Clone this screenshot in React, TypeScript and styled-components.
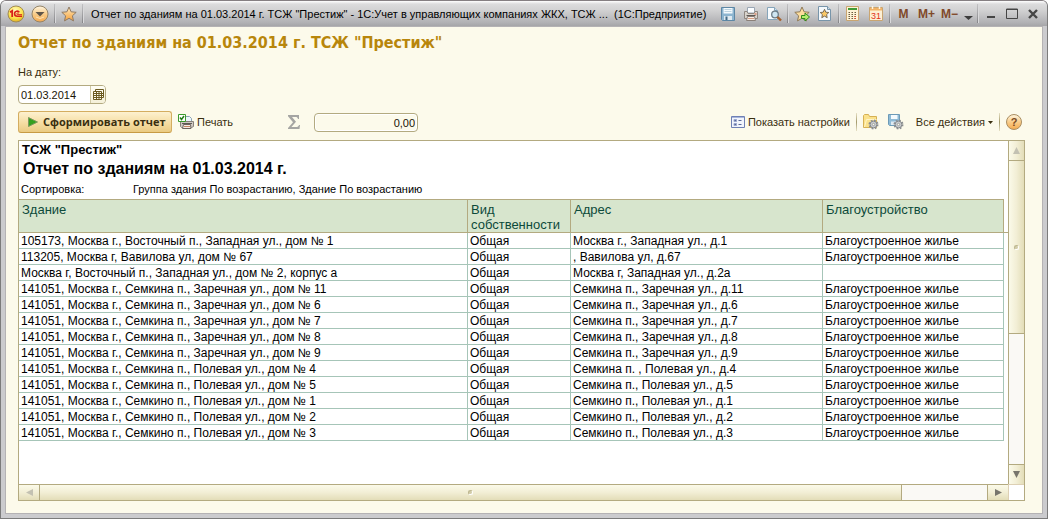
import React from "react";
import styled, { createGlobalStyle, css } from "styled-components";

const colors = {
  cream: "#fcfaeb",
  line: "#b3aa80",
  grid: "#a6c5b8",
  headBg: "#d7e5cd",
  headText: "#0d4a3a",
  text: "#3a2f10",
  accent: "#b8860b",
};

const GlobalStyle = createGlobalStyle`
  *, *::before, *::after { box-sizing: border-box; }
  body { margin: 0; background: #fff; font: 11px/14px "Liberation Sans", Arial, sans-serif; color: ${colors.text}; }
  button, input { font: inherit; color: inherit; margin: 0; }
  svg { display: block; flex: none; }
`;

const Window = styled.div`
  min-height: 100vh;
  display: flex;
  flex-direction: column;
  border: 1px solid #7b7b7b;
  border-top-color: #857f82;
  border-radius: 6px 6px 0 0;
  background: #cbcbce;
  overflow: hidden;
`;

const TitleBar = styled.header`
  display: flex;
  align-items: center;
  height: 25px;
  padding: 0 4px 0 3px;
  background: linear-gradient(#fff 0, #dcdcdd 3px, #d2d2d3 9px, #b0b0b3 22px, #a5a5a8 25px);
`;

const TitleText = styled.span`
  flex: 1;
  min-width: 0;
  padding-left: 6px;
  color: #000;
  white-space: pre;
  overflow: hidden;
  text-overflow: ellipsis;
`;

const Divider = styled.span`
  flex: none;
  width: 1px;
  height: 19px;
  margin: 0 2px;
  background: linear-gradient(#c2c2c4, #858588);
  box-shadow: 1px 0 0 #d9d9db;
`;

const BarButton = styled.button<{ $w?: number }>`
  flex: none;
  display: flex;
  align-items: center;
  justify-content: center;
  width: ${(p) => p.$w ?? 23}px;
  height: 22px;
  padding: 0;
  border: 0;
  background: none;
`;

const MemoryButton = styled(BarButton)`
  color: #80492a;
  font: bold 12px/14px "Liberation Sans", Arial, sans-serif;
`;

const Client = styled.main`
  flex: 1;
  display: flex;
  flex-direction: column;
  margin: 0 4px 4px;
  padding: 5px 17px 12px 12px;
  border: 1px solid #b4b2b4;
  background: ${colors.cream};
`;

const PageTitle = styled.h1`
  margin: 0 0 11px;
  font: bold 16px/22px "DejaVu Sans Condensed", Tahoma, sans-serif;
  color: ${colors.accent};
`;

const DateField = styled.div`
  display: flex;
  flex-direction: column;
  align-items: flex-start;
  gap: 6px;
`;

const fieldBox = css`
  height: 19px;
  border: 1px solid ${colors.line};
  border-radius: 4px;
  overflow: hidden;
`;

const DateBox = styled.div`
  ${fieldBox}
  display: flex;
  width: 88px;
  background: #fff;
`;

const DateInput = styled.input`
  flex: 1;
  min-width: 0;
  padding: 1px 2px 0;
  border: 0;
  outline: 0;
  background: none;
  color: #1a1508;
`;

const PickButton = styled.button`
  display: flex;
  align-items: center;
  justify-content: center;
  width: 15px;
  padding: 0;
  border: 0;
  border-left: 1px solid #d0c9a4;
  background: linear-gradient(#fffef5, #f4f0d8);
`;

const Toolbar = styled.div`
  display: flex;
  align-items: center;
  height: 22px;
  margin: 7px 0;
`;

const PrimaryButton = styled.button`
  display: flex;
  align-items: center;
  gap: 5px;
  width: 154px;
  height: 22px;
  padding: 0 4px 0 9px;
  border: 1px solid #d4ad60;
  border-bottom-color: #c79b45;
  border-radius: 3px;
  background: linear-gradient(#fdf1cf, #f5dda3 55%, #eacb83);
  font: bold 11px/14px "Open Sans", Tahoma, sans-serif;
  white-space: nowrap;
`;

const ToolButton = styled.button`
  display: flex;
  align-items: center;
  gap: 3px;
  height: 20px;
  padding: 0;
  border: 0;
  background: none;
  white-space: nowrap;
`;

const PrintButton = styled(ToolButton)`
  margin-left: 6px;
`;

const Sum = styled.label`
  display: flex;
  align-items: center;
  gap: 14px;
  margin-left: 55px;
`;

const SumInput = styled.input`
  ${fieldBox}
  width: 104px;
  padding: 1px 2px 0;
  background: ${colors.cream};
  box-shadow: inset 0 0 0 1px #fff;
  color: #1a1508;
  text-align: right;
`;

const ToolsRight = styled.div`
  display: flex;
  align-items: center;
  gap: 6px;
  margin-left: auto;
  padding-right: 3px;
`;

const ToolDivider = styled.span`
  width: 1px;
  height: 18px;
  background: linear-gradient(#e6e0c4, #a49a6c, #e6e0c4);
`;

const IconPair = styled.div`
  display: flex;
  gap: 9px;
  margin-right: 6px;
`;

const Sheet = styled.section`
  flex: 1;
  display: grid;
  grid-template: 1fr 16px / minmax(0, 1fr) 16px;
  border: 1px solid ${colors.line};
  background: #fff;
`;

const Report = styled.div`
  color: #000;
  overflow: hidden;
`;

const Organization = styled.div`
  padding-left: 3px;
  font: bold 13px/17px "Liberation Sans", Arial, sans-serif;
`;

const ReportTitle = styled.h2`
  margin: 0;
  padding-left: 4px;
  font: bold 16px/21px "Liberation Sans", Arial, sans-serif;
`;

const Sorting = styled.div`
  display: grid;
  grid-template-columns: 112px 1fr;
  padding-left: 2px;
  line-height: 20px;
`;

const Table = styled.table`
  width: calc(100% - 4px);
  table-layout: fixed;
  border-collapse: separate;
  border-spacing: 0;
`;

const Col = styled.col<{ $w?: number }>`
  width: ${(p) => (p.$w ? `${p.$w}px` : "auto")};
`;

const HeadCell = styled.th`
  height: 34px;
  padding: 2px 3px 0;
  border: solid ${colors.line};
  border-width: 1px 1px 1px 0;
  background: ${colors.headBg};
  color: ${colors.headText};
  font: 13px/15px "Liberation Sans", Arial, sans-serif;
  text-align: left;
  vertical-align: top;

  /* the rule under the header runs on to the edge of the sheet */
  &:last-child {
    position: relative;
  }
  &:last-child::after {
    content: "";
    position: absolute;
    left: 100%;
    bottom: -1px;
    width: 5px;
    height: 1px;
    background: ${colors.line};
  }
`;

const Cell = styled.td`
  height: 16px;
  padding: 1px 2px 0;
  border: solid ${colors.grid};
  border-width: 0 1px 1px 0;
  font: 12px/14px "Liberation Sans", Arial, sans-serif;
  white-space: nowrap;
  overflow: hidden;
`;

const ScrollBar = styled.div<{ $vertical?: boolean }>`
  display: flex;
  flex-direction: ${(p) => (p.$vertical ? "column" : "row")};
  border: 0 solid ${colors.line};
  border-width: ${(p) => (p.$vertical ? "0 0 0 1px" : "1px 0 0 0")};
  background: #faf9f5;
`;

const barFill = css<{ $vertical?: boolean }>`
  background: linear-gradient(${(p) => (p.$vertical ? "to right" : "to bottom")}, #fbfae9, #f2eed5 50%, #e3ddb8);
`;

const ScrollButton = styled.button<{ $vertical?: boolean; $end?: boolean }>`
  ${barFill}
  flex: none;
  display: flex;
  align-items: center;
  justify-content: center;
  ${(p) => (p.$vertical ? "height: 20px;" : "width: 21px;")}
  padding: 0;
  border: 0 solid ${colors.line};
  ${(p) => `border-${p.$vertical ? (p.$end ? "top" : "bottom") : p.$end ? "left" : "right"}-width: 1px;`}
`;

const Thumb = styled.div<{ $vertical?: boolean }>`
  ${barFill}
  flex: ${(p) => (p.$vertical ? 57 : 91)};
  display: flex;
  align-items: center;
  justify-content: center;
  border: 0 solid ${colors.line};
  ${(p) => (p.$vertical ? "border-bottom-width: 1px;" : "border-right-width: 1px;")}
`;

const Track = styled.div<{ $vertical?: boolean }>`
  flex: ${(p) => (p.$vertical ? 43 : 9)};
`;

const Grip = styled.span`
  width: 5px;
  height: 5px;
  border-radius: 3px;
  border: 1px solid #bdb68f;
  border-right-color: #fff;
  border-bottom-color: #fff;
  background: #d3cda9;
`;

const Corner = styled.div`
  border: solid #ddd0b4;
  border-width: 1px 0 0 1px;
`;

const STAR = "M8 1 L10.1 5.8 L15.2 6.3 L11.4 9.8 L12.5 14.9 L8 12.3 L3.5 14.9 L4.6 9.8 L0.8 6.3 L5.9 5.8 Z";

const Logo = () => (
  <svg width="18" height="18" viewBox="0 0 18 18">
    <defs>
      <radialGradient id="logo" cx=".45" cy=".3" r=".75">
        <stop offset="0" stopColor="#fffbc0" />
        <stop offset=".6" stopColor="#fbe24a" />
        <stop offset="1" stopColor="#dca51d" />
      </radialGradient>
    </defs>
    <circle cx="9" cy="9" r="8" fill="url(#logo)" stroke="#a08a55" />
    <path d="M3 7.2 L5.2 5.8 V12" fill="none" stroke="#d8201a" strokeWidth="1.8" />
    <path d="M12.2 7.4 C11.4 5.5 7.6 5.6 7.6 8.8 C7.6 10.8 9 11.3 10.3 11.3 H15" fill="none" stroke="#d8201a" strokeWidth="1.6" />
    <path d="M11.6 8.4 C10.9 7.7 9.6 8 9.7 9 C9.8 9.6 10.2 9.6 10.8 9.6 H15" fill="none" stroke="#d8201a" strokeWidth=".9" />
  </svg>
);

const MenuBall = () => (
  <svg width="18" height="18" viewBox="0 0 18 18">
    <defs>
      <linearGradient id="ball" x2="0" y2="1">
        <stop offset="0" stopColor="#fff6e2" />
        <stop offset=".5" stopColor="#f9cd8a" />
        <stop offset="1" stopColor="#f4a94e" />
      </linearGradient>
    </defs>
    <circle cx="9" cy="9" r="8" fill="url(#ball)" stroke="#958468" />
    <path d="M4.5 7 H13.5 L9 11.5 Z" fill="#5f5549" />
    <path d="M5 12 Q9 15 13 12" fill="none" stroke="#fde2b0" />
  </svg>
);

const StarIcon = () => (
  <svg width="16" height="16" viewBox="0 0 16 16">
    <defs>
      <linearGradient id="star" x2="0" y2="1">
        <stop offset="0" stopColor="#ffe9bd" />
        <stop offset="1" stopColor="#f5a23c" />
      </linearGradient>
    </defs>
    <path d={STAR} fill="url(#star)" stroke="#8f7a64" />
  </svg>
);

const SaveIcon = () => (
  <svg width="16" height="16" viewBox="0 0 16 16">
    <path d="M1.5 1.5 H14.5 V14.5 H2.5 L1.5 13.5 Z" fill="#8db5d0" stroke="#5d87a5" />
    <path d="M3.5 2 H12.5 V7.5 H3.5 Z" fill="#f4fafd" />
    <path d="M4.5 3.5 H11.5 M4.5 5.5 H11.5" stroke="#bcd3e0" />
    <path d="M4 10 H12 V14 H4 Z" fill="#dfeaf1" />
    <path d="M5.5 10.5 H7.5 V14 H5.5 Z" fill="#426a87" />
  </svg>
);

const PrinterIcon = () => (
  <svg width="16" height="16" viewBox="0 0 16 16">
    <path d="M4.5 1.5 H11.5 V7 H4.5 Z" fill="#fbfdff" stroke="#9aa7b5" />
    <path d="M1.5 5.5 H4 L5 7.5 H11 L12 5.5 H14.5 V12.5 H1.5 Z" fill="#d9d4cd" stroke="#8f8780" />
    <path d="M3.5 9.5 H12.5" stroke="#5f5854" />
    <path d="M11.5 8 H13.5" stroke="#e0653d" />
    <path d="M4.5 10.5 H11.5 L12.5 14.5 H3.5 Z" fill="#f6ece6" stroke="#8b8079" />
    <path d="M5 12.5 H11" stroke="#d59e83" />
  </svg>
);

const PreviewIcon = () => (
  <svg width="16" height="16" viewBox="0 0 16 16">
    <path d="M1.5 1.5 H8.5 L11.5 4.5 V13.5 H1.5 Z" fill="#f7fbfe" stroke="#86a5ba" />
    <path d="M8.5 1.5 V4.5 H11.5" fill="#cfe0ec" stroke="#86a5ba" />
    <circle cx="9" cy="8.5" r="3.3" fill="#cfe6f2" stroke="#6c7b85" strokeWidth="1.3" />
    <path d="M11.5 11 L15 14.5" stroke="#a5602c" strokeWidth="2.4" />
  </svg>
);

const StarArrowIcon = () => (
  <svg width="16" height="16" viewBox="0 0 16 16">
    <path d={STAR} fill="#fbdc9c" stroke="#8f7a58" />
    <path d="M7.5 9.5 H11 V7 L15.5 11 L11 15 V12.5 H7.5 Z" fill="#b5ec6c" stroke="#2f8a1d" />
  </svg>
);

const PageStarIcon = () => (
  <svg width="13" height="15" viewBox="0 0 13 15">
    <path d="M.5 .5 H9.5 L12.5 3.5 V14.5 H.5 Z" fill="#f3f8fc" stroke="#7895aa" />
    <path d="M9.5 .5 V3.5 H12.5" fill="#cadbe7" stroke="#7895aa" />
    <path d="M6.5 3.3 L7.8 6.2 L10.8 6.5 L8.6 8.6 L9.2 11.7 L6.5 10.1 L3.8 11.7 L4.4 8.6 L2.2 6.5 L5.2 6.2 Z" fill="#fbc865" stroke="#6b5f4d" strokeWidth=".9" />
  </svg>
);

const CalcIcon = () => (
  <svg width="13" height="15" viewBox="0 0 13 15">
    <path d="M.5 .5 H12.5 V14.5 H.5 Z" fill="#fdf3d6" stroke="#c9a571" />
    <path d="M2 2 H11 V4 H2 Z" fill="#3f9a36" />
    <path d="M2.5 6.5 H11 M2.5 8.5 H11 M2.5 10.5 H11 M2.5 12.5 H11" stroke="#6d5b3f" strokeDasharray="1.5 1.5" />
    <path d="M8.5 10.5 H10 M8.5 12.5 H10" stroke="#d6432b" />
  </svg>
);

const CalendarIcon = () => (
  <svg width="14" height="15" viewBox="0 0 14 15">
    <path d="M.5 1.5 H13.5 V14.5 H.5 Z" fill="#fdf0d4" stroke="#c9a571" />
    <path d="M1 2 H13 V4.5 H1 Z" fill="#f2b368" />
    <path d="M3.5 0 V3 M10.5 0 V3" stroke="#fff6e4" strokeWidth="1.5" />
    <text x="7" y="13" textAnchor="middle" fontFamily="Liberation Sans" fontSize="9" fill="#e2301a">31</text>
  </svg>
);

const MoreIcon = () => (
  <svg width="9" height="14" viewBox="0 0 9 14"><path d="M0 9 H9 L4.5 13 Z" fill="#3d3d3d" /></svg>
);
const MinimizeIcon = () => (
  <svg width="8" height="12" viewBox="0 0 8 12"><path d="M0 9 H8" stroke="#454545" strokeWidth="2" /></svg>
);
const MaximizeIcon = () => (
  <svg width="12" height="11" viewBox="0 0 12 11"><path d="M.5 1 H11.5 V10.5 H.5 Z M0 1.5 H12" fill="none" stroke="#454545" /></svg>
);
const CloseIcon = () => (
  <svg width="10" height="10" viewBox="0 0 10 10"><path d="M1 1 L9 9 M9 1 L1 9" stroke="#454545" strokeWidth="2.4" /></svg>
);

const PickIcon = () => (
  <svg width="11" height="11" viewBox="0 0 11 11">
    <path d="M2.5 .5 H10.5 V8.5 H2.5 Z" fill="#fffdf0" stroke="#6b5a20" />
    <path d="M.5 2.5 H8.5 V10.5 H.5 Z" fill="#fffdf0" stroke="#6b5a20" />
    <path d="M.5 4.5 H10.5 M.5 6.5 H10.5 M.5 8.5 H8.5 M3.5 2.5 V10.5 M6 2.5 V10.5" stroke="#6b5a20" />
  </svg>
);

const PlayIcon = () => (
  <svg width="10" height="10" viewBox="0 0 10 10">
    <path d="M.5 .5 L9.5 5 L.5 9.5 Z" fill="#35a01f" stroke="#7d9a5e" />
  </svg>
);

const PrintCheckIcon = () => (
  <svg width="16" height="16" viewBox="0 0 16 16">
    <path d="M7.5 2.5 H11.5 L13.5 4.5 V9 H7.5 Z" fill="#eef6fb" stroke="#8ba4b5" />
    <path d="M2.5 7.5 H15.5 V12.5 L13.5 13.5 H3.5 L2.5 12.5 Z" fill="#cfcac4" stroke="#87807a" />
    <path d="M4 9.5 H14" stroke="#5f5854" />
    <path d="M5.5 10.5 H12.5 L13 14.5 H4.5 Z" fill="#f6ece6" stroke="#6d645f" />
    <path d="M6 12.5 H12" stroke="#c98768" />
    <path d="M.5 .5 H7.5 V7.5 H.5 Z" fill="#fff" stroke="#3d9a2e" />
    <path d="M2 3.5 L3.5 5.5 L6 2" fill="none" stroke="#237e18" strokeWidth="1.5" />
  </svg>
);

const SigmaIcon = () => (
  <svg width="12" height="14" viewBox="0 0 12 14">
    <path d="M0 0 H11 V4 H10 C9.5 2.5 9 2 7.5 2 H4 L8 6.8 L3.4 12 H8 C9.8 12 10.4 11.5 11 10 H12 L11.5 14 H0 V13 L5 7.3 L0 1.2 Z" fill="#a5a5a3" />
  </svg>
);

const SettingsIcon = () => (
  <svg width="14" height="12" viewBox="0 0 14 12">
    <path d="M.5 .5 H13.5 V11.5 H.5 Z" fill="#f2f5fc" stroke="#6f80b4" />
    <path d="M1 1.5 H13" stroke="#a9b7dc" />
    <path d="M3 3.5 H5.5 V5.5 H3 Z M3 7.5 H5.5 V9.5 H3 Z" fill="#596796" stroke="#9aa7cf" />
    <path d="M7.5 4.5 H10.5 M7.5 8.5 H10.5" stroke="#596796" />
  </svg>
);

const Gear = () => (
  <g>
    <circle cx="10.5" cy="10.5" r="4" fill="none" stroke="#8a8d90" strokeWidth="2" strokeDasharray="1.7 1.44" />
    <circle cx="10.5" cy="10.5" r="3.4" fill="#c9cccf" stroke="#85888c" />
    <circle cx="10.5" cy="10.5" r="1.2" fill="#fcfaeb" stroke="#85888c" strokeWidth=".7" />
  </g>
);

const FolderGearIcon = () => (
  <svg width="16" height="16" viewBox="0 0 16 16">
    <path d="M.5 13.5 V1.5 L1.5 .5 H5.5 L6.5 2.5 H13.5 V13.5 Z" fill="#fbe28c" stroke="#d6b154" />
    <path d="M1.5 13 L3.5 5.5 H13.5" fill="none" stroke="#fff5c9" />
    <Gear />
  </svg>
);

const SaveGearIcon = () => (
  <svg width="16" height="16" viewBox="0 0 16 16">
    <path d="M.5 .5 H11.5 V11.5 H1.5 L.5 10.5 Z" fill="#8fbbd6" stroke="#6c9ab7" />
    <path d="M3 1 H9.5 V5 H3 Z" fill="#f4fafd" />
    <path d="M3 7.5 H9 V11 H3 Z" fill="#dfeaf1" />
    <Gear />
  </svg>
);

const CaretIcon = () => (
  <svg width="5" height="3" viewBox="0 0 5 3"><path d="M0 0 H5 L2.5 3 Z" fill="#3a2f10" /></svg>
);

const HelpIcon = () => (
  <svg width="16" height="16" viewBox="0 0 16 16">
    <circle cx="8" cy="8" r="7.5" fill="url(#ball)" stroke="#a98e62" />
    <text x="8" y="12" textAnchor="middle" fontFamily="Liberation Sans" fontWeight="bold" fontSize="11" fill="#7a4a22">?</text>
  </svg>
);

const arrows = {
  up: "M4.5 1 L8 8 H1 Z",
  down: "M1 1 H8 L4.5 8 Z",
  left: "M1 4.5 L8 1 V8 Z",
  right: "M8 4.5 L1 1 V8 Z",
};

const Arrow = ({ dir, off }: { dir: keyof typeof arrows; off?: boolean }) => (
  <svg width="9" height="9" viewBox="0 0 9 9"><path d={arrows[dir]} fill={off ? "#c3c1b2" : "#77756c"} /></svg>
);

const GOOD = "Благоустроенное жилье";
const rows: [string, string, string][] = [
  ["105173, Москва г., Восточный п., Западная ул., дом № 1", "Москва г., Западная ул., д.1", GOOD],
  ["113205, Москва г, Вавилова ул, дом № 67", ", Вавилова ул, д.67", GOOD],
  ["Москва г, Восточный п., Западная ул., дом № 2, корпус а", "Москва г, Западная ул., д.2а", ""],
  ["141051, Москва г., Семкина п., Заречная ул., дом № 11", "Семкина п., Заречная ул., д.11", GOOD],
  ["141051, Москва г., Семкина п., Заречная ул., дом № 6", "Семкина п., Заречная ул., д.6", GOOD],
  ["141051, Москва г., Семкина п., Заречная ул., дом № 7", "Семкина п., Заречная ул., д.7", GOOD],
  ["141051, Москва г., Семкина п., Заречная ул., дом № 8", "Семкина п., Заречная ул., д.8", GOOD],
  ["141051, Москва г., Семкина п., Заречная ул., дом № 9", "Семкина п., Заречная ул., д.9", GOOD],
  ["141051, Москва г., Семкина п., Полевая ул., дом № 4", "Семкина п. , Полевая ул., д.4", GOOD],
  ["141051, Москва г., Семкина п., Полевая ул., дом № 5", "Семкина п., Полевая ул., д.5", GOOD],
  ["141051, Москва г., Семкино п., Полевая ул., дом № 1", "Семкино п., Полевая ул., д.1", GOOD],
  ["141051, Москва г., Семкино п., Полевая ул., дом № 2", "Семкино п., Полевая ул., д.2", GOOD],
  ["141051, Москва г., Семкино п., Полевая ул., дом № 3", "Семкино п., Полевая ул., д.3", GOOD],
];

export default function App() {
  return (
    <Window>
      <GlobalStyle />
      <TitleBar>
        <BarButton aria-label="1С"><Logo /></BarButton>
        <BarButton $w={25} aria-label="Главное меню"><MenuBall /></BarButton>
        <Divider />
        <BarButton aria-label="Избранное"><StarIcon /></BarButton>
        <Divider />
        <TitleText>{'Отчет по зданиям на 01.03.2014 г. ТСЖ "Престиж" - 1С:Учет в управляющих компаниях ЖКХ, ТСЖ ...  (1С:Предприятие)'}</TitleText>
        <BarButton aria-label="Сохранить"><SaveIcon /></BarButton>
        <BarButton aria-label="Печать"><PrinterIcon /></BarButton>
        <BarButton aria-label="Просмотр"><PreviewIcon /></BarButton>
        <Divider />
        <BarButton aria-label="Добавить в избранное"><StarArrowIcon /></BarButton>
        <BarButton aria-label="Страница избранного"><PageStarIcon /></BarButton>
        <Divider />
        <BarButton aria-label="Калькулятор"><CalcIcon /></BarButton>
        <BarButton aria-label="Календарь"><CalendarIcon /></BarButton>
        <Divider />
        <MemoryButton>M</MemoryButton>
        <MemoryButton>M+</MemoryButton>
        <MemoryButton>M−</MemoryButton>
        <BarButton $w={14} aria-label="Ещё"><MoreIcon /></BarButton>
        <Divider />
        <BarButton $w={21} aria-label="Свернуть"><MinimizeIcon /></BarButton>
        <BarButton $w={21} aria-label="Развернуть"><MaximizeIcon /></BarButton>
        <BarButton $w={21} aria-label="Закрыть"><CloseIcon /></BarButton>
      </TitleBar>

      <Client>
        <PageTitle>Отчет по зданиям на 01.03.2014 г. ТСЖ "Престиж"</PageTitle>

        <DateField>
          <label htmlFor="date">На дату:</label>
          <DateBox>
            <DateInput id="date" defaultValue="01.03.2014" />
            <PickButton aria-label="Выбрать дату"><PickIcon /></PickButton>
          </DateBox>
        </DateField>

        <Toolbar>
          <PrimaryButton><PlayIcon />Сформировать отчет</PrimaryButton>
          <PrintButton><PrintCheckIcon />Печать</PrintButton>
          <Sum>
            <SigmaIcon />
            <SumInput aria-label="Сумма" defaultValue="0,00" readOnly />
          </Sum>
          <ToolsRight>
            <ToolButton><SettingsIcon />Показать настройки</ToolButton>
            <ToolDivider />
            <IconPair>
              <ToolButton aria-label="Выбрать настройки"><FolderGearIcon /></ToolButton>
              <ToolButton aria-label="Сохранить настройки"><SaveGearIcon /></ToolButton>
            </IconPair>
            <ToolButton>Все действия<CaretIcon /></ToolButton>
            <ToolDivider />
            <ToolButton aria-label="Справка"><HelpIcon /></ToolButton>
          </ToolsRight>
        </Toolbar>

        <Sheet>
          <Report>
            <Organization>ТСЖ "Престиж"</Organization>
            <ReportTitle>Отчет по зданиям на 01.03.2014 г.</ReportTitle>
            <Sorting>
              <span>Сортировка:</span>
              <span>Группа здания По возрастанию, Здание По возрастанию</span>
            </Sorting>
            <Table>
              <colgroup>
                <Col />
                <Col $w={103} />
                <Col $w={252} />
                <Col $w={181} />
              </colgroup>
              <thead>
                <tr>
                  <HeadCell>Здание</HeadCell>
                  <HeadCell>Вид собственности</HeadCell>
                  <HeadCell>Адрес</HeadCell>
                  <HeadCell>Благоустройство</HeadCell>
                </tr>
              </thead>
              <tbody>
                {rows.map(([building, address, comfort]) => (
                  <tr key={building}>
                    <Cell>{building}</Cell>
                    <Cell>Общая</Cell>
                    <Cell>{address}</Cell>
                    <Cell>{comfort}</Cell>
                  </tr>
                ))}
              </tbody>
            </Table>
          </Report>
          <ScrollBar $vertical>
            <ScrollButton $vertical aria-label="Вверх"><Arrow dir="up" off /></ScrollButton>
            <Thumb $vertical><Grip /></Thumb>
            <Track $vertical />
            <ScrollButton $vertical $end aria-label="Вниз"><Arrow dir="down" /></ScrollButton>
          </ScrollBar>
          <ScrollBar>
            <ScrollButton aria-label="Влево"><Arrow dir="left" off /></ScrollButton>
            <Thumb><Grip /></Thumb>
            <Track />
            <ScrollButton $end aria-label="Вправо"><Arrow dir="right" /></ScrollButton>
          </ScrollBar>
          <Corner />
        </Sheet>
      </Client>
    </Window>
  );
}
